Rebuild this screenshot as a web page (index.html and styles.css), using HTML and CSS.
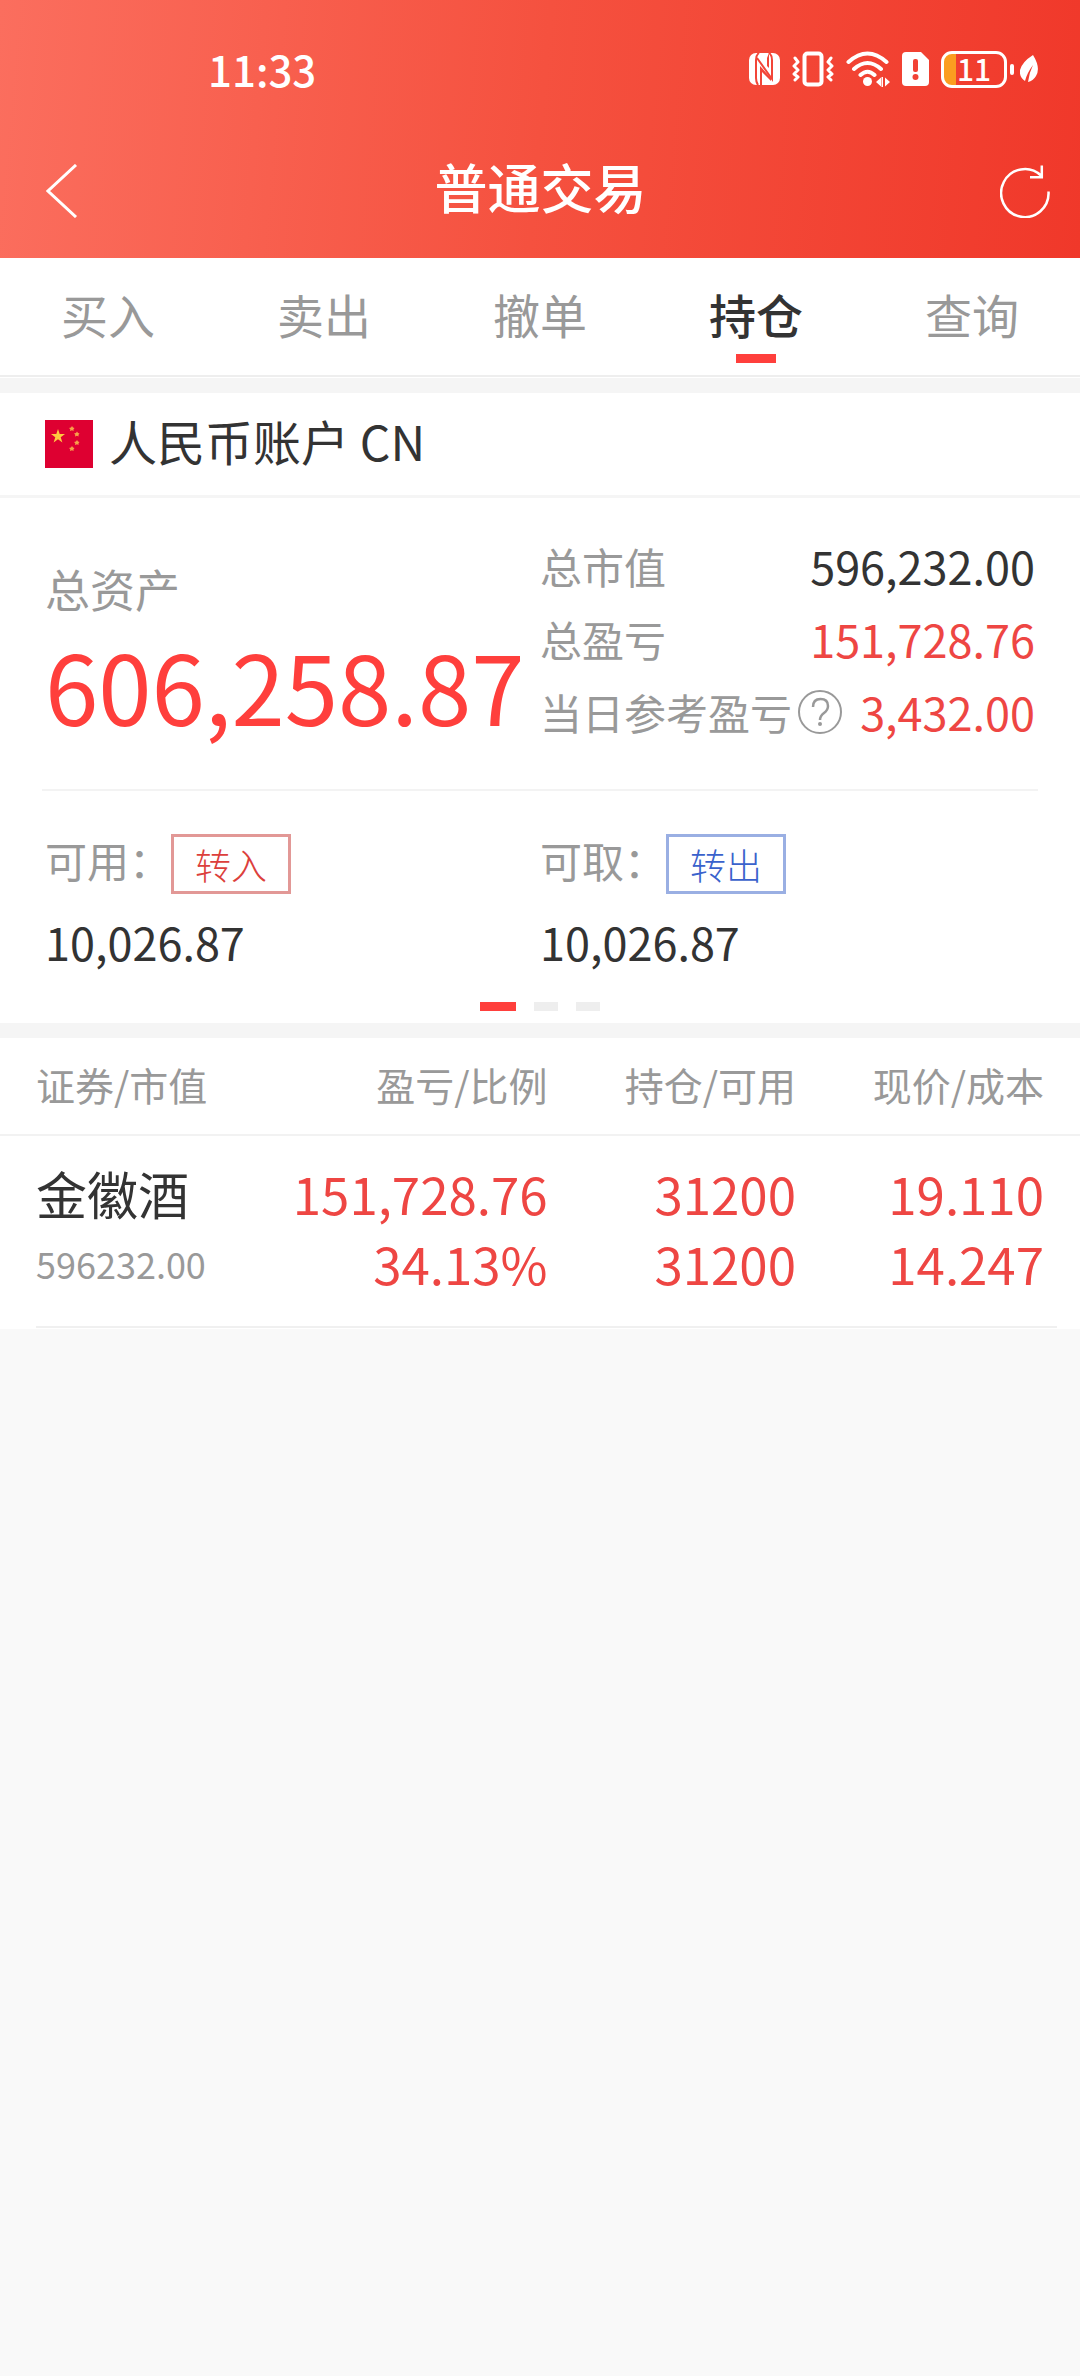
FILE: index.html
```
<!DOCTYPE html>
<html lang="zh-CN">

<head>
    <meta charset="UTF-8">
    <meta name="viewport" content="width=device-width, initial-scale=1">
    <title>普通交易</title>
    <link rel="stylesheet" href="styles.css">
</head>

<body>
    <header class="header">
        <div class="status-bar">
            <span class="time">11:33</span>
            <div class="status-icons">
                <!-- NFC -->
                <svg width="31" height="32" viewBox="0 0 31 32">
                    <rect width="31" height="32" rx="7" fill="#fff" />
                    <path fill="none" stroke="#f24538" stroke-width="2" d="M10 0Q7 2 7 7v18q0 4 2 7M20 0q3 2 3 7v19L8 5" />
                    <path fill="#f24538" d="M11 13l11 12v3l-9-9v13h-2zM20 0v15l-2-2V5z" />
                </svg>
                <!-- vibration -->
                <svg width="42" height="36" viewBox="0 0 42 36">
                    <rect x="12.500" y="2.500" width="17" height="31" rx="3" fill="none" stroke="#fff" stroke-width="4" />
                    <path fill="none" stroke="#fff" stroke-width="3" stroke-linecap="round" stroke-linejoin="round" d="M3 7l3 4-4 4 4 4-4 4 4 3-3 3M39 7l-3 4 4 4-4 4 4 4-4 3 3 3" />
                </svg>
                <!-- wifi -->
                <svg width="44" height="36" viewBox="0 0 44 36">
                    <path fill="none" stroke="#fff" stroke-width="4" stroke-linecap="round" d="M2.500 11q19-17 38 0M8 18q13.500-12 27 0M14.500 24q7-6.500 14 0" />
                    <circle cx="21.500" cy="30.500" r="4.500" fill="#fff" />
                    <path fill="#fff" d="M30 31l5-4.500v9zM44 31l-5-4.500v9zM35.500 26h1.500v10h-1.500z" />
                </svg>
                <!-- sim card -->
                <svg width="27" height="34" viewBox="0 0 27 34">
                    <path fill="#fff" d="M4 0h15l8 8v22q0 4-4 4H4q-4 0-4-4V4q0-4 4-4z" />
                    <rect x="11" y="7" width="5" height="13" rx="2" fill="#f24235" />
                    <circle cx="13.500" cy="25" r="3" fill="#f24235" />
                </svg>
                <span class="battery">
                    <span class="battery-body">11</span>
                    <span class="battery-cap"></span>
                </span>
                <!-- power saving leaf -->
                <svg width="18" height="28" viewBox="0 0 18 28">
                    <path fill="#fff" d="M13 0q8 13 3 21-3 5-8 6 1-9 5-17Q7 18 5 26-1 22 0 15 2 7 13 0z" />
                </svg>
            </div>
        </div>
        <nav class="nav-bar">
            <button class="icon-btn" type="button" aria-label="返回">
                <svg width="32" height="54" viewBox="0 0 32 54">
                    <path fill="none" stroke="#fff" stroke-width="3" d="M30 1L2 27l28 26" />
                </svg>
            </button>
            <h1 class="title">普通交易</h1>
            <button class="icon-btn refresh" type="button" aria-label="刷新">
                <svg width="50" height="54" viewBox="0 0 50 54">
                    <path fill="none" stroke="#fff" stroke-width="2.500" d="M48.500 27.500A23.700 24 0 1 1 41 11.500M41.800 1.500V13.200H30" />
                </svg>
            </button>
        </nav>
    </header>

    <nav class="tabs">
        <a class="tab" href="#">买入</a>
        <a class="tab" href="#">卖出</a>
        <a class="tab" href="#">撤单</a>
        <a class="tab active" href="#">持仓</a>
        <a class="tab" href="#">查询</a>
    </nav>

    <main>
        <section class="card">
            <h2 class="account">
                <svg width="48" height="48" viewBox="0 0 48 48">
                    <rect width="48" height="48" fill="#de0031" />
                    <path fill="#ffc940" d="M13 9l1.700 5h5.300l-4.300 3.200 1.700 5.300-4.400-3.200-4.400 3.200 1.700-5.300L6 14h5.300z" />
                    <g fill="#f7a24a">
                        <path d="M27 6l1 1.500 1.500.5-1 1.300V11L27 10.300 25 11l.3-1.700L24 8l2-.5z" />
                        <path d="M32 11.500l1 1.500 1.500.5-1 1.300v1.700l-1.500-.7-2 .7.300-1.700-1.300-1.300 2-.5z" />
                        <path d="M32 20l1 1.500 1.500.5-1 1.300V25l-1.500-.7-2 .7.300-1.700L29 22l2-.5z" />
                        <path d="M27 26l1 1.500 1.500.5-1 1.300V31l-1.500-.7-2 .7.300-1.700L24 28l2-.5z" />
                    </g>
                </svg>
                <span>人民币账户 CN</span>
            </h2>

            <div class="assets">
                <div class="total">
                    <div class="total-label">总资产</div>
                    <div class="total-value">606,258.87</div>
                </div>
                <dl class="stats">
                    <div class="stat">
                        <dt>总市值</dt>
                        <dd>596,232.00</dd>
                    </div>
                    <div class="stat">
                        <dt>总盈亏</dt>
                        <dd class="up">151,728.76</dd>
                    </div>
                    <div class="stat">
                        <dt>当日参考盈亏</dt>
                        <dd class="help">
                            <button class="icon-btn" type="button" aria-label="说明">
                                <svg width="44" height="46" viewBox="0 0 44 46">
                                    <circle cx="22" cy="23" r="21" fill="none" stroke="#999" stroke-width="2" />
                                    <path fill="none" stroke="#999" stroke-width="2.500" d="M15 18q0-8 7.500-8t7.500 7q0 4-4 7t-4 7" />
                                    <circle cx="22" cy="35" r="2" fill="#999" />
                                </svg>
                            </button>
                        </dd>
                        <dd class="up">3,432.00</dd>
                    </div>
                </dl>
            </div>

            <div class="cash">
                <div class="cash-item">
                    <div class="cash-top">
                        <span class="cash-label">可用：</span>
                        <button class="btn btn-in" type="button">转入</button>
                    </div>
                    <div class="cash-value">10,026.87</div>
                </div>
                <div class="cash-item">
                    <div class="cash-top">
                        <span class="cash-label">可取：</span>
                        <button class="btn btn-out" type="button">转出</button>
                    </div>
                    <div class="cash-value">10,026.87</div>
                </div>
            </div>

            <div class="pager">
                <span class="dot current"></span>
                <span class="dot"></span>
                <span class="dot"></span>
            </div>
        </section>

        <section class="card holdings">
            <table>
                <colgroup>
                    <col class="col-name">
                    <col>
                    <col class="col-amount">
                    <col class="col-price">
                </colgroup>
                <thead>
                    <tr>
                        <th>证券/市值</th>
                        <th>盈亏/比例</th>
                        <th>持仓/可用</th>
                        <th>现价/成本</th>
                    </tr>
                </thead>
                <tbody>
                    <tr>
                        <td>
                            <div class="stock-name">金徽酒</div>
                            <div class="stock-value">596232.00</div>
                        </td>
                        <td>
                            <div>151,728.76</div>
                            <div>34.13%</div>
                        </td>
                        <td>
                            <div>31200</div>
                            <div>31200</div>
                        </td>
                        <td>
                            <div>19.110</div>
                            <div>14.247</div>
                        </td>
                    </tr>
                </tbody>
            </table>
        </section>
    </main>
</body>

</html>
```

FILE: styles.css
```
* {
    margin: 0;
    padding: 0;
    box-sizing: border-box;
}

body {
    font-family: "Noto Sans CJK SC", "Noto Sans", sans-serif;
    background: #f9f9f9;
    color: #333;
}

svg {
    display: block;
}

a {
    color: inherit;
    text-decoration: none;
}

.icon-btn {
    background: none;
    border: none;
    cursor: pointer;
}

/* Header */
.header {
    background: linear-gradient(95deg, #fb6e5e, #f5513f 50%, #f0382a);
    color: #fff;
}

.status-bar {
    display: flex;
    justify-content: space-between;
    align-items: center;
    height: 124px;
    padding: 14px 42px 0 208px;
}

.time {
    font-size: 42px;
    font-weight: 500;
    line-height: 60px;
}

.status-icons {
    display: flex;
    align-items: center;
    gap: 12px;
}

.battery {
    display: flex;
    align-items: center;
    gap: 3px;
    margin-right: -6px;
}

.battery-body {
    width: 66px;
    height: 37px;
    border: 3px solid #fff;
    border-radius: 11px;
    background: linear-gradient(to right, #fb9d20 12px, transparent 12px);
    font-size: 30px;
    font-weight: 500;
    line-height: 28px;
    text-align: center;
}

.battery-cap {
    width: 4px;
    height: 11px;
    border-radius: 2px;
    background: #fff;
}

.nav-bar {
    display: grid;
    grid-template-columns: 1fr auto 1fr;
    align-items: center;
    height: 134px;
    padding: 0 30px 0 46px;
}

.nav-bar .icon-btn {
    justify-self: start;
}

.nav-bar .refresh {
    justify-self: end;
}

.title {
    font-size: 53px;
    font-weight: 500;
    line-height: 72px;
    padding: 0 15px 10px 0;
}

/* Tabs */
.tabs {
    display: flex;
    background: #fff;
    border-bottom: 2px solid #eee;
}

.tab {
    flex: 1;
    position: relative;
    height: 117px;
    font-size: 47px;
    line-height: 112px;
    text-align: center;
    color: #999;
}

.tab.active {
    color: #333;
    font-weight: 500;
}

.tab.active::after {
    content: '';
    position: absolute;
    left: 50%;
    bottom: 12px;
    width: 40px;
    height: 9px;
    margin-left: -20px;
    background: #ff3f3c;
}

.card {
    background: #fff;
    border-top: 15px solid #f5f5f5;
}

.tabs + main {
    border-top: 1px solid #fff;
}

/* Account */
.account {
    display: flex;
    align-items: center;
    gap: 16px;
    padding: 0 45px;
    border-bottom: 3px solid #f5f5f5;
    font-size: 48px;
    font-weight: 400;
}

.account span {
    line-height: 94px;
    padding-bottom: 8px;
}

.assets {
    display: grid;
    grid-template-columns: 1fr 1fr;
    margin: 0 42px;
    padding: 31px 3px 41px;
    border-bottom: 2px solid #f3f3f3;
}

.total {
    padding-top: 30px;
}

.total-label {
    font-size: 45px;
    line-height: 60px;
    color: #999;
}

.total-value {
    margin-top: 6px;
    font-size: 96px;
    line-height: 120px;
    color: #ff3f3c;
}

.stat {
    display: flex;
    align-items: center;
    line-height: 73px;
}

.stat dt {
    font-size: 42px;
    color: #999;
}

.stat dd {
    font-size: 45px;
    margin-left: auto;
}

.stat .help {
    display: flex;
    align-items: center;
    margin-left: 6px;
}

.stat .up {
    color: #ee4643;
}

.cash {
    display: grid;
    grid-template-columns: 1fr 1fr;
    padding: 43px 45px 0;
}

.cash-top {
    display: flex;
    align-items: flex-start;
}

.cash-label {
    font-size: 42px;
    line-height: 52px;
    color: #999;
}

.btn {
    width: 120px;
    height: 60px;
    border: 3px solid;
    background: #fff;
    font-family: inherit;
    font-size: 36px;
    font-weight: 300;
    line-height: 52px;
    cursor: pointer;
}

.btn-in {
    border-color: #e29896;
    color: #dc3f3c;
}

.btn-out {
    border-color: #9aafe3;
    color: #3a62cc;
}

.cash-value {
    margin-top: 18px;
    font-size: 45px;
    line-height: 60px;
}

.pager {
    display: flex;
    justify-content: center;
    gap: 18px;
    padding: 30px 0 12px;
}

.dot {
    width: 24px;
    height: 9px;
    background: #eee;
}

.dot.current {
    width: 36px;
    background: #ff3f3c;
}

/* Holdings */
.holdings {
    position: relative;
    padding-bottom: 3px;
}

/* row separator, inset from both sides */
.holdings::after {
    content: '';
    position: absolute;
    left: 36px;
    right: 23px;
    bottom: 1px;
    height: 2px;
    background: #f0f0f0;
}

table {
    width: 100%;
    table-layout: fixed;
    border-collapse: collapse;
}

.col-name {
    width: 27%;
}

.col-amount {
    width: 23%;
}

.col-price {
    width: 26.3%;
}

th {
    padding-bottom: 4px;
    border-bottom: 2px solid #f2f2f2;
    font-size: 39px;
    font-weight: 400;
    line-height: 92px;
    text-align: right;
    color: #999;
    white-space: nowrap;
}

td {
    padding: 22px 0 28px;
    font-size: 51px;
    line-height: 70px;
    text-align: right;
    color: #ee4643;
}

th:first-child,
td:first-child {
    padding-left: 36px;
    text-align: left;
}

th:last-child,
td:last-child {
    padding-right: 36px;
}

.stock-name {
    color: #333;
}

.stock-value {
    font-size: 36px;
    color: #999;
}
```
